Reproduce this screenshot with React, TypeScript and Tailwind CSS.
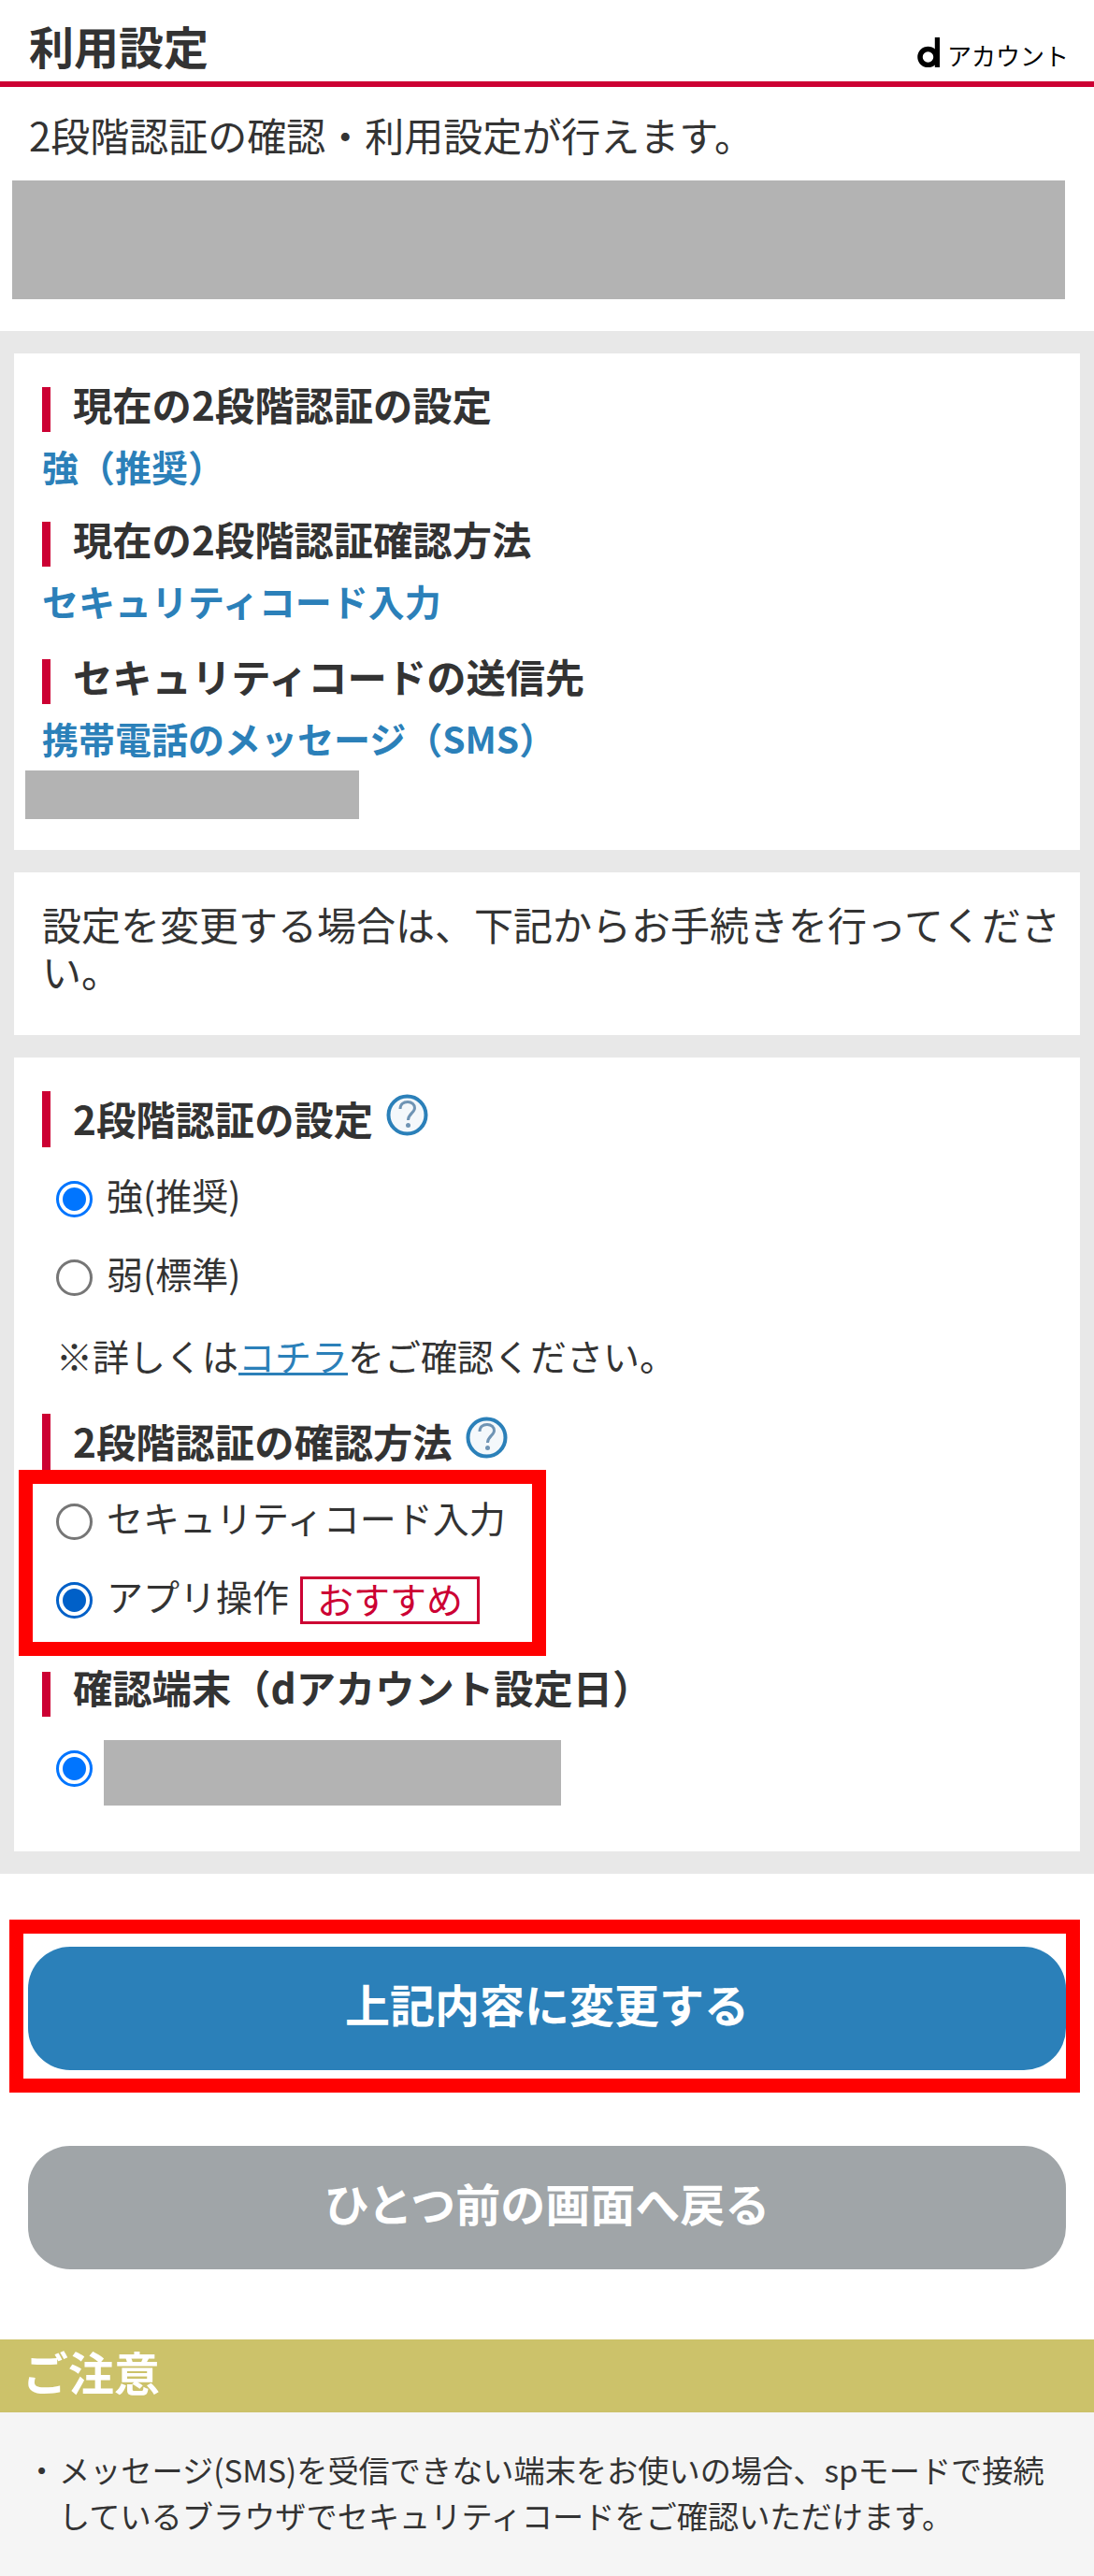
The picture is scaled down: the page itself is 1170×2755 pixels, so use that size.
const font = { fontFamily: '"Noto Sans CJK JP", "Noto Sans", sans-serif' };

function Heading({ children, tall, up }: { children: React.ReactNode; tall?: boolean; up?: boolean }) {
  return (
    <div className="flex items-center">
      <div className={`w-[9px] bg-[#cc0033] ${tall ? "h-[60px]" : "h-12"}`} />
      <h2 className={`ml-6 text-[42.3px] leading-[48px] font-bold text-[#333333] whitespace-nowrap ${tall ? "-mt-[2px]" : up ? "-mt-[16px]" : "-mt-[12px]"}`}>{children}</h2>
    </div>
  );
}

function Value({ children }: { children: React.ReactNode }) {
  return <p className="mt-[12px] text-[39px] leading-[48px] font-bold text-[#2b80b9] whitespace-nowrap">{children}</p>;
}

function Radio({ on, dark }: { on?: boolean; dark?: boolean }) {
  if (!on) return <span className="block w-[39px] h-[39px] shrink-0 rounded-full border-[3px] border-[#767676] bg-white" />;
  return (
    <span
      className={`flex items-center justify-center w-[39px] h-[39px] shrink-0 rounded-full border-[3px] bg-white ${dark ? "border-[#0060c8]" : "border-[#0075ff]"}`}
    >
      <span className={`block w-[25px] h-[25px] rounded-full ${dark ? "bg-[#0060c8]" : "bg-[#0075ff]"}`} />
    </span>
  );
}

function Help() {
  return (
    <svg width="45" height="45" viewBox="0 0 45 45" className="ml-[14px] -mt-[10px] shrink-0">
      <circle cx="22.5" cy="22.5" r="20" fill="#f4f8fb" stroke="#2b80b9" strokeWidth="4" />
      <path d="M15 16c0-5 3.500-7.500 8-7.500s7.500 3 7.500 6.500c0 5-7 6-7 13" fill="none" stroke="#6f94b4" strokeWidth="3" />
      <circle cx="23.500" cy="33.500" r="2.500" fill="#6f94b4" />
    </svg>
  );
}

function Label({ children }: { children: React.ReactNode }) {
  return <span className="ml-[15px] -mt-[12px] text-[39px] leading-[48px] whitespace-nowrap">{children}</span>;
}

export default function App() {
  return (
    <div style={font} className="relative w-[1170px] h-[2755px] overflow-hidden bg-white text-[#333333]">
      <header className="flex items-end justify-between h-[93px] border-b-[6px] border-[#cc0033] pl-[31px] pr-[27px]">
        <h1 className="mb-[9px] text-[48px] leading-[60px] font-bold">利用設定</h1>
        <div className="mb-[12px] flex items-end text-black">
          <svg width="24" height="32" viewBox="0 0 24 32" className="mb-[3px]">
            <circle cx="11.500" cy="21" r="8.500" fill="none" stroke="#000" strokeWidth="5.500" />
            <rect x="18.800" y="0" width="5.200" height="32" fill="#000" />
          </svg>
          <span className="ml-[8px] text-[26px] leading-[32px]">アカウント</span>
        </div>
      </header>

      <p className="pl-[31px] pt-[21px] text-[42px] leading-[60px] whitespace-nowrap">2段階認証の確認・利用設定が行えます。</p>
      <div className="ml-[13px] mt-[19px] w-[1126px] h-[127px] bg-[#b3b3b3]" />

      <section className="mt-[34px] h-[1650px] bg-[#e8e8e8] pt-[24px] px-[15px] flex flex-col gap-[24px]">
        <div className="h-[531px] shrink-0 bg-white pt-[36px] pl-[30px]">
          <Heading>現在の2段階認証の設定</Heading>
          <Value>強（推奨）</Value>
          <div className="mt-[36px]"><Heading>現在の2段階認証確認方法</Heading></div>
          <Value>セキュリティコード入力</Value>
          <div className="mt-[39px]"><Heading>セキュリティコードの送信先</Heading></div>
          <Value>携帯電話のメッセージ（SMS）</Value>
          <div className="-ml-[18px] mt-[11px] w-[357px] h-[52px] bg-[#b3b3b3]" />
        </div>

        <div className="h-[174px] shrink-0 bg-white pt-[30px] pl-[30px] pr-[15px] text-[42px] leading-[50px]">
          設定を変更する場合は、下記からお手続きを行ってください。
        </div>

        <div className="h-[849px] shrink-0 bg-white pt-[36px] pl-[30px]">
          <div className="flex items-center">
            <Heading tall>2段階認証の設定</Heading>
            <Help />
          </div>
          <label className="mt-[36px] ml-[15px] flex items-center h-[39px]">
            <Radio on />
            <Label>強(推奨)</Label>
          </label>
          <label className="mt-[45px] ml-[15px] flex items-center h-[39px]">
            <Radio />
            <Label>弱(標準)</Label>
          </label>
          <p className="mt-[39px] ml-[15px] text-[39px] leading-[48px] whitespace-nowrap">
            ※詳しくは<a className="text-[#2b80b9] underline">コチラ</a>をご確認ください。
          </p>
          <div className="mt-[39px] flex items-center">
            <Heading tall>2段階認証の確認方法</Heading>
            <Help />
          </div>
          <label className="mt-[36px] ml-[15px] flex items-center h-[39px]">
            <Radio />
            <Label>セキュリティコード入力</Label>
          </label>
          <label className="mt-[45px] ml-[15px] flex items-center h-[39px]">
            <Radio on dark />
            <Label>アプリ操作</Label>
            <span className="ml-[12px] w-[192px] h-[51px] border-[3px] border-[#cc0033] text-[#cc0033] text-[39px] leading-[42px] pb-[6px] flex items-center justify-center whitespace-nowrap">おすすめ</span>
          </label>
          <div className="mt-[57px]"><Heading up>確認端末（dアカウント設定日）</Heading></div>
          <div className="mt-[25px] ml-[15px] flex items-start">
            <div className="mt-[11px]"><Radio on /></div>
            <div className="ml-[12px] w-[489px] h-[70px] bg-[#b3b3b3]" />
          </div>
        </div>
      </section>

      <div className="mt-[78px] px-[30px]">
        <button className="block w-[1110px] h-[132px] rounded-[45px] bg-[#2b80b9] text-white text-[48px] font-bold pb-[12px]">上記内容に変更する</button>
        <button className="block mt-[81px] w-[1110px] h-[132px] rounded-[45px] bg-[#a0a5a8] text-white text-[48px] font-bold pb-[12px]">ひとつ前の画面へ戻る</button>
      </div>

      <div className="mt-[75px] h-[78px] bg-[#ccc26a] pl-[24px] pb-[10px] flex items-center text-white text-[49px] leading-[60px] font-bold">ご注意</div>
      <div className="h-[175px] bg-[#f5f5f5] pt-[36px] pl-[28px] text-[33.2px] leading-[49px] text-[#333333]">
        <div className="flex">
          <span className="w-[35px] shrink-0">・</span>
          <p className="w-[1070px]">メッセージ(SMS)を受信できない端末をお使いの場合、spモードで接続しているブラウザでセキュリティコードをご確認いただけます。</p>
        </div>
      </div>

      <div className="absolute left-[20px] top-[1572px] w-[564px] h-[199px] border-[15px] border-[#ff0000]" />
      <div className="absolute left-[10px] top-[2053px] w-[1145px] h-[185px] border-[15px] border-[#ff0000]" />
    </div>
  );
}
